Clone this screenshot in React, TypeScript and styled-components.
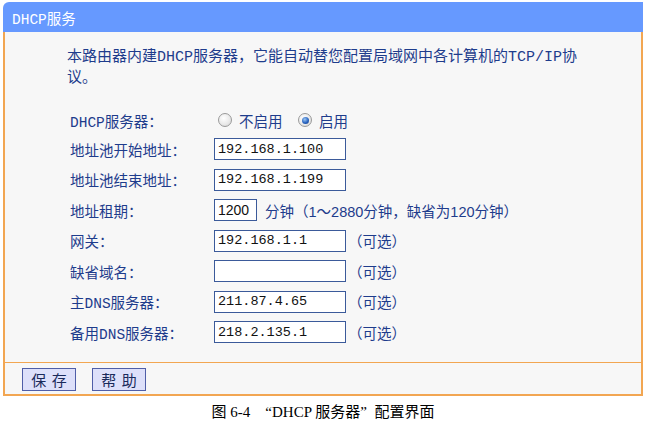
import React from 'react';
import styled, { createGlobalStyle } from 'styled-components';

const GlobalStyle = createGlobalStyle`
  html, body {
    margin: 0;
    padding: 0;
    background: #ffffff;
  }
`;

const CJK = `"Liberation Mono", "Noto Sans CJK SC", sans-serif`;
const NAVY = '#1e3c8c';
const ORANGE = '#f2a652';
const PANEL_BG = '#f7f7f7';

const Page = styled.div`
  width: 640px;
  padding: 2px 4px 0 3px;
`;

const Header = styled.div`
  height: 30px;
  display: flex;
  align-items: center;
  padding-left: 9px;
  background: #6699ff;
  border-top-left-radius: 6px;
  color: #ffffff;
  font-family: ${CJK};
  font-size: 14.5px;
`;

const Frame = styled.div`
  background: ${PANEL_BG};
  border-left: 2px solid ${ORANGE};
  border-right: 2px solid ${ORANGE};
  border-bottom: 2px solid ${ORANGE};
`;

const Body = styled.div`
  padding: 14.5px 0 14.5px 62px;
`;

const Intro = styled.p`
  margin: 0;
  width: 518px;
  color: ${NAVY};
  font-family: ${CJK};
  font-size: 15px;
  line-height: 21px;
`;

const Form = styled.div`
  margin-top: 17.5px;
  padding-left: 3px;
  display: flex;
  flex-direction: column;
`;

const Row = styled.div<{ $h?: number }>`
  height: ${(p) => p.$h ?? 30.5}px;
  display: flex;
  align-items: center;
`;

const Label = styled.span`
  width: 144px;
  flex: none;
  color: ${NAVY};
  font-family: ${CJK};
  font-size: 14.5px;
`;

const TextField = styled.input<{ $w?: number; $sans?: boolean }>`
  box-sizing: border-box;
  width: ${(p) => p.$w ?? 132}px;
  height: 22px;
  margin: 0;
  padding: 0 3px;
  border: 1px solid #3b5a9a;
  background: #ffffff;
  color: #111111;
  font-family: ${(p) =>
    p.$sans ? `"Liberation Sans", Arial, sans-serif` : `"Liberation Mono", monospace`};
  font-size: ${(p) => (p.$sans ? 14 : 13.5)}px;
  outline: none;
`;

const Note = styled.span<{ $gap?: number }>`
  margin-left: ${(p) => p.$gap ?? 2}px;
  color: ${NAVY};
  font-family: "Liberation Sans", "Noto Sans CJK SC", sans-serif;
  font-size: 14.5px;
`;

const Radio = styled.input.attrs({ type: 'radio' })<{ $gap?: number }>`
  appearance: none;
  -webkit-appearance: none;
  box-sizing: border-box;
  width: 14px;
  height: 14px;
  margin: 0 0 0 ${(p) => p.$gap ?? 4}px;
  border: 1px solid #9a9a9a;
  border-radius: 50%;
  background: radial-gradient(circle at 40% 35%, #ffffff 0%, #e8e8e8 60%, #cfcfcf 100%);
  position: relative;

  &:checked::after {
    content: '';
    position: absolute;
    left: 2.5px;
    top: 2.5px;
    width: 7px;
    height: 7px;
    border-radius: 50%;
    background: radial-gradient(circle at 40% 35%, #9cc8f4 0%, #2a64c0 55%, #143a80 100%);
  }
`;

const RadioText = styled.span`
  margin-left: 7px;
  color: ${NAVY};
  font-family: ${CJK};
  font-size: 14.5px;
`;

const Footer = styled.div`
  border-top: 1px solid ${ORANGE};
  padding: 5px 0 3px 17px;
  display: flex;
  gap: 16px;
`;

const Button = styled.button`
  box-sizing: border-box;
  width: 54px;
  height: 23px;
  margin: 0;
  padding: 0;
  border: 1px solid #4f5ea8;
  background: #dde0fa;
  color: #1a2a5a;
  font-family: "Noto Sans CJK SC", sans-serif;
  font-size: 15px;
  line-height: 21px;
  word-spacing: 2px;
`;

const Caption = styled.div`
  margin-top: 6px;
  text-align: center;
  color: #000000;
  font-family: "Liberation Serif", "Noto Sans CJK SC", serif;
  font-size: 15px;
  line-height: 20px;
`;

const fields: { label: string; value: string }[] = [
  { label: '地址池开始地址：', value: '192.168.1.100' },
  { label: '地址池结束地址：', value: '192.168.1.199' },
];

const extras: { label: string; value: string }[] = [
  { label: '网关：', value: '192.168.1.1' },
  { label: '缺省域名：', value: '' },
  { label: '主DNS服务器：', value: '211.87.4.65' },
  { label: '备用DNS服务器：', value: '218.2.135.1' },
];

const App = () => (
  <>
    <GlobalStyle />
    <Page>
      <Header>DHCP服务</Header>
      <Frame>
        <Body>
          <Intro>
            本路由器内建DHCP服务器，它能自动替您配置局域网中各计算机的TCP/IP协议。
          </Intro>
          <Form>
            <Row $h={28}>
              <Label>DHCP服务器：</Label>
              <Radio name="dhcp" />
              <RadioText>不启用</RadioText>
              <Radio name="dhcp" defaultChecked $gap={15.5} />
              <RadioText>启用</RadioText>
            </Row>
            {fields.map((f) => (
              <Row key={f.label}>
                <Label>{f.label}</Label>
                <TextField defaultValue={f.value} />
              </Row>
            ))}
            <Row>
              <Label>地址租期：</Label>
              <TextField $w={43} $sans defaultValue="1200" />
              <Note $gap={8}>分钟（1～2880分钟，缺省为120分钟）</Note>
            </Row>
            {extras.map((f) => (
              <Row key={f.label}>
                <Label>{f.label}</Label>
                <TextField defaultValue={f.value} />
                <Note>（可选）</Note>
              </Row>
            ))}
          </Form>
        </Body>
        <Footer>
          <Button>保 存</Button>
          <Button>帮 助</Button>
        </Footer>
      </Frame>
      <Caption>{'图 6-4\u00a0\u00a0\u00a0\u00a0“DHCP 服务器”\u00a0\u00a0配置界面'}</Caption>
    </Page>
  </>
);

export default App;
